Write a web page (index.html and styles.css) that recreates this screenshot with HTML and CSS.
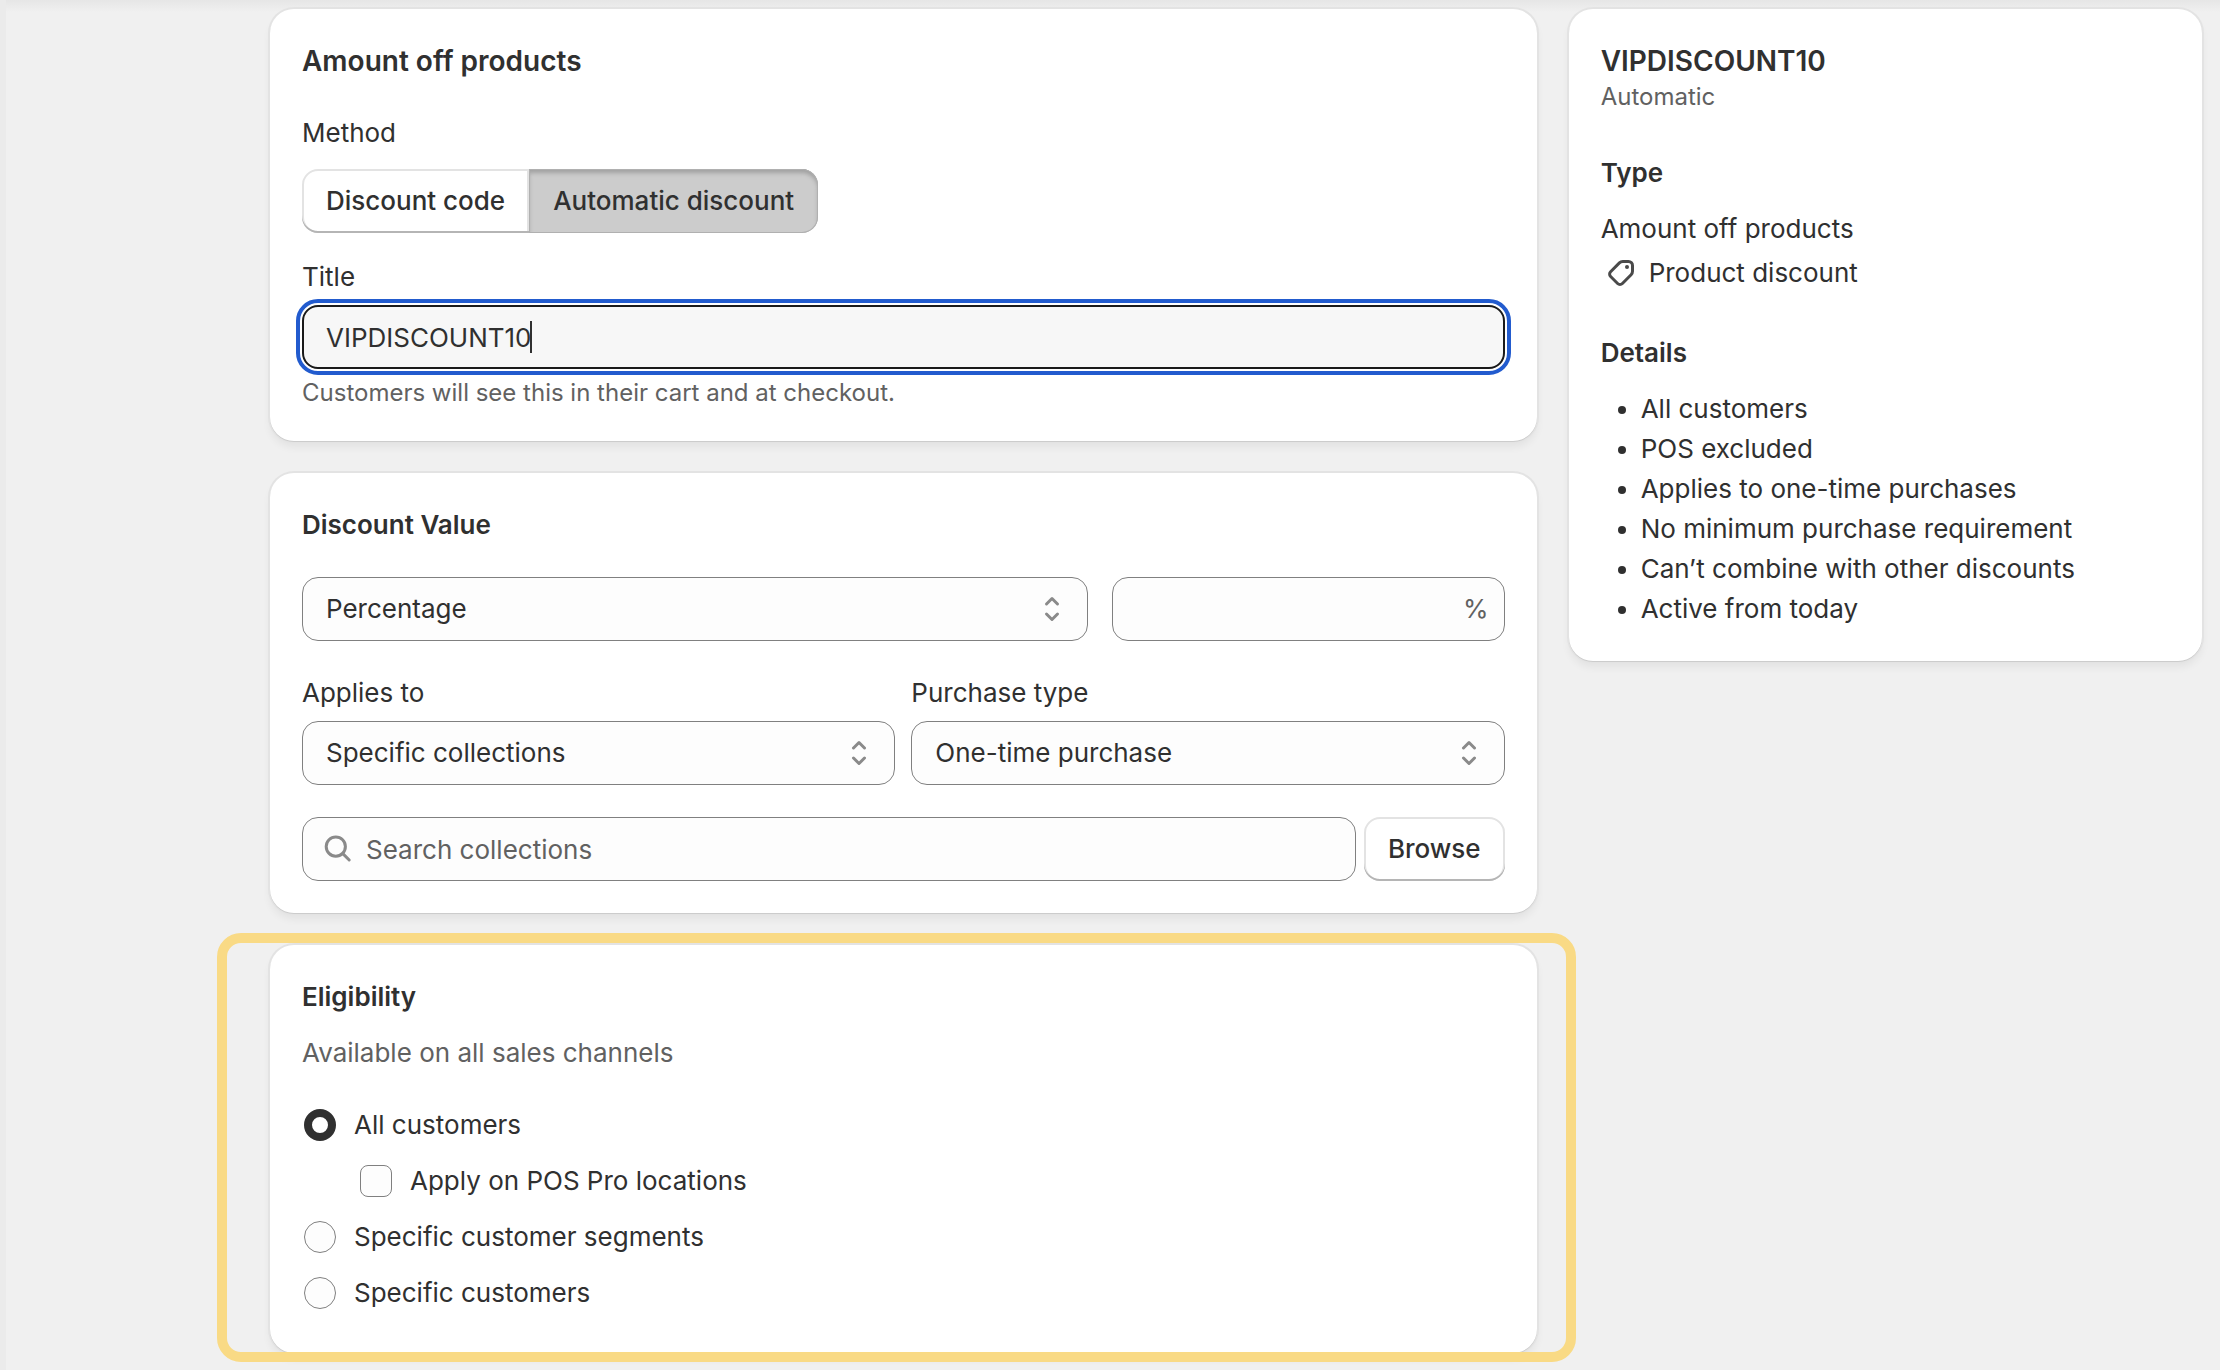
FILE: index.html
```html
<!DOCTYPE html>
<html lang="en">
<head>
  <meta charset="UTF-8" />
  <meta name="viewport" content="width=device-width, initial-scale=1.0" />
  <title>Create discount</title>
  <link rel="stylesheet" href="styles.css">
</head>
<body>
  <div class="page">
    <main class="main">
      <section class="card">
        <h1 class="title">Amount off products</h1>
        <div class="method">
          <span id="methodLabel">Method</span>
          <div class="segmented" role="group" aria-labelledby="methodLabel">
            <button type="button" class="btn">Discount code</button>
            <button type="button" class="btn pressed" aria-pressed="true">Automatic discount</button>
          </div>
        </div>
        <div class="field title-field">
          <label for="discountTitle">Title</label>
          <div class="control">
            <input type="text" class="input focused" id="discountTitle" value="VIPDISCOUNT10">
            <span class="caret"></span>
          </div>
          <p class="help">Customers will see this in their cart and at checkout.</p>
        </div>
      </section>

      <section class="card">
        <h2 class="heading">Discount Value</h2>
        <div class="value-row">
          <div class="control">
            <select class="input" aria-label="Discount type">
              <option>Percentage</option>
              <option>Fixed amount</option>
            </select>
            <svg class="icon select-icon" viewBox="0 0 20 20"><path d="M7.25 7.5 10 4.75l2.75 2.75M7.25 12.5 10 15.25l2.75-2.75"/></svg>
          </div>
          <div class="control">
            <input type="text" class="input" aria-label="Discount value">
            <span class="suffix">%</span>
          </div>
        </div>
        <div class="half-row">
          <div class="field">
            <label for="appliesTo">Applies to</label>
            <div class="control">
              <select class="input" id="appliesTo">
                <option>Specific collections</option>
                <option>Specific products</option>
              </select>
              <svg class="icon select-icon" viewBox="0 0 20 20"><path d="M7.25 7.5 10 4.75l2.75 2.75M7.25 12.5 10 15.25l2.75-2.75"/></svg>
            </div>
          </div>
          <div class="field">
            <label for="purchaseType">Purchase type</label>
            <div class="control">
              <select class="input" id="purchaseType">
                <option>One-time purchase</option>
                <option>Subscription</option>
              </select>
              <svg class="icon select-icon" viewBox="0 0 20 20"><path d="M7.25 7.5 10 4.75l2.75 2.75M7.25 12.5 10 15.25l2.75-2.75"/></svg>
            </div>
          </div>
        </div>
        <div class="search-row">
          <div class="control">
            <input type="text" class="input search" placeholder="Search collections" aria-label="Search collections">
            <svg class="icon search-icon" viewBox="0 0 20 20"><circle cx="8.9" cy="8.8" r="4.8"/><path d="M12.4 12.3 15.6 15.5"/></svg>
          </div>
          <button type="button" class="btn">Browse</button>
        </div>
      </section>

      <section class="card highlighted">
        <h2 class="heading">Eligibility</h2>
        <p class="subdued">Available on all sales channels</p>
        <div class="choices">
          <label class="choice"><input type="radio" name="eligibility" checked> All customers</label>
          <label class="choice nested"><input type="checkbox"> Apply on POS Pro locations</label>
          <label class="choice"><input type="radio" name="eligibility"> Specific customer segments</label>
          <label class="choice"><input type="radio" name="eligibility"> Specific customers</label>
        </div>
      </section>
    </main>

    <aside class="card summary">
      <h2 class="title">VIPDISCOUNT10</h2>
      <p class="small">Automatic</p>
      <h3 class="heading">Type</h3>
      <p>Amount off products</p>
      <p class="type-line">
        <svg class="icon tag-icon" viewBox="0 0 20 20"><path d="M10.9 4.25h2.85a2 2 0 0 1 2 2v2.9a2.4 2.4 0 0 1-.7 1.7l-4.35 4.4a1.7 1.7 0 0 1-2.4 0l-3.5-3.5a1.7 1.7 0 0 1 0-2.4l4.4-4.4a2.4 2.4 0 0 1 1.7-.7z"/><circle class="dot" cx="13" cy="7" r="1"/></svg>
        Product discount
      </p>
      <h3 class="heading">Details</h3>
      <ul class="details">
        <li>All customers</li>
        <li>POS excluded</li>
        <li>Applies to one-time purchases</li>
        <li>No minimum purchase requirement</li>
        <li>Can’t combine with other discounts</li>
        <li>Active from today</li>
      </ul>
    </aside>
  </div>
</body>
</html>
```

FILE: styles.css
```css
* {
  box-sizing: border-box;
}

body {
  margin: 0;
  min-height: 100vh;
  font-family: Inter, sans-serif;
  font-size: 26px;
  line-height: 40px;
  color: #303030;
  background: linear-gradient(#e6e6e6, rgba(240, 240, 240, 0) 12px) #f0f0f0;
  border-left: 6px solid #ebebeb;
}

h1,
h2,
h3,
p,
ul {
  margin: 0;
}

.page {
  display: grid;
  grid-template-columns: 2fr 1fr;
  align-items: start;
  gap: 32px;
  padding: 9px 18px 17px 264px;
}

.main {
  display: flex;
  flex-direction: column;
  gap: 32px;
  min-width: 0;
}

.card {
  padding: 32px;
  background-color: #fff;
  border-radius: 24px;
  box-shadow: 0 1px 0 0 #cccccc, 0 0 0 2px #e3e3e3, 0 6px 8px rgba(0, 0, 0, 0.06);
}

.title {
  font-size: 28px;
  font-weight: 600;
}

.heading {
  font-size: 26px;
  font-weight: 600;
}

.small,
.help {
  font-size: 24px;
  line-height: 32px;
  color: #616161;
}

.subdued {
  margin-top: 16px;
  color: #616161;
}

/* buttons */
.btn {
  height: 64px;
  padding: 0 24px;
  font: inherit;
  font-weight: 550;
  color: #303030;
  background-color: #fff;
  border: none;
  border-radius: 16px;
  box-shadow: inset 0 -2px 0 #b5b5b5, inset 0 0 0 2px #e3e3e3;
  cursor: pointer;
}

.method {
  margin-top: 32px;
}

.segmented {
  display: flex;
  margin-top: 16px;
}

.segmented .btn:first-child {
  border-radius: 16px 0 0 16px;
}

.segmented .btn:last-child {
  border-radius: 0 16px 16px 0;
}

.btn.pressed {
  background-color: #cccccc;
  box-shadow: inset 0 0 0 1px #b0b0b0, inset 0 4px 4px #a0a0a0;
}

/* fields */
.field label {
  display: block;
  margin-bottom: 8px;
}

.title-field {
  margin-top: 24px;
}

.help {
  margin-top: 8px;
}

.control {
  position: relative;
  flex: 1;
  min-width: 0;
}

.input {
  display: block;
  width: 100%;
  height: 64px;
  padding: 0 23px;
  font: inherit;
  color: #303030;
  background-color: #fdfdfd;
  border: 1px solid #808080;
  border-radius: 16px;
  appearance: none;
}

.input.focused {
  padding: 0 22px;
  background-color: #f7f7f7;
  border: 2px solid #1a1a1a;
  outline: 4px solid #225bce;
  outline-offset: 2px;
}

.input.search {
  padding-left: 63px;
}

.input::placeholder {
  color: #616161;
  opacity: 1;
}

.caret {
  position: absolute;
  top: 16px;
  left: 228px;
  width: 2px;
  height: 32px;
  background-color: #303030;
}

.suffix {
  position: absolute;
  top: 12px;
  right: 16px;
  color: #616161;
}

.icon {
  width: 40px;
  height: 40px;
  fill: none;
  stroke: #8a8a8a;
  stroke-width: 1.5;
  stroke-linecap: round;
  stroke-linejoin: round;
  pointer-events: none;
}

.select-icon {
  position: absolute;
  top: 12px;
  right: 16px;
}

.search-icon {
  position: absolute;
  top: 12px;
  left: 16px;
}

.tag-icon {
  stroke: #4a4a4a;
}

.tag-icon .dot {
  fill: #4a4a4a;
  stroke: none;
}

.value-row {
  display: grid;
  grid-template-columns: 2fr 1fr;
  gap: 24px;
  margin-top: 32px;
}

.half-row {
  display: grid;
  grid-template-columns: 1fr 1fr;
  gap: 16px;
  margin-top: 32px;
}

.search-row {
  display: flex;
  gap: 8px;
  margin-top: 32px;
}

/* eligibility */
.highlighted {
  position: relative;
}

.highlighted::after {
  content: "";
  position: absolute;
  top: -12px;
  right: -39px;
  bottom: -9px;
  left: -53px;
  border: 10px solid #f9da85;
  border-radius: 24px;
  pointer-events: none;
}

.choices {
  display: flex;
  flex-direction: column;
  margin-top: 24px;
}

.choice {
  display: flex;
  align-items: center;
  gap: 16px;
  padding: 8px 0;
}

.choice.nested {
  padding-left: 56px;
}

.choice input {
  width: 32px;
  height: 32px;
  margin: 0 2px;
  background-color: #fdfdfd;
  border: 1px solid #808080;
  border-radius: 50%;
  appearance: none;
}

.choice input[type="checkbox"] {
  border-radius: 8px;
}

.choice input[type="radio"]:checked {
  background-color: #fff;
  border: 8px solid #303030;
}

/* summary */
.summary .heading {
  margin: 40px 0 16px;
}

.type-line {
  display: flex;
  align-items: center;
  gap: 8px;
  margin-top: 4px;
}

.details {
  padding-left: 40px;
}
```
